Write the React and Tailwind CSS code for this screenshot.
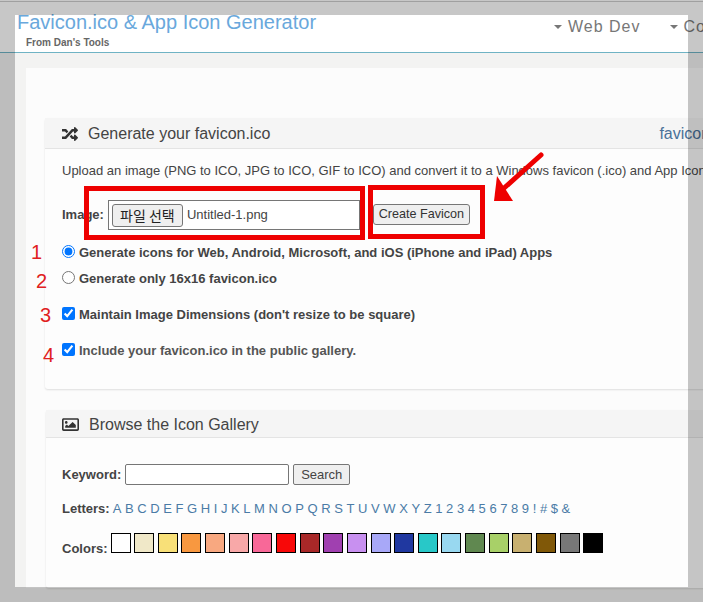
import { FaRandom, FaRegImage } from "react-icons/fa";

const LETTERS = "A B C D E F G H I J K L M N O P Q R S T U V W X Y Z 1 2 3 4 5 6 7 8 9 ! # $ &".split(" ");
const COLORS = [
  "bg-[#ffffff]", "bg-[#f0e8c8]", "bg-[#f8e078]", "bg-[#f89840]", "bg-[#f8a880]", "bg-[#f8a8a8]",
  "bg-[#f86898]", "bg-[#f80808]", "bg-[#a82828]", "bg-[#a040b0]", "bg-[#c890f0]", "bg-[#a8a8f8]",
  "bg-[#2038a0]", "bg-[#28c8c8]", "bg-[#98d8f0]", "bg-[#608850]", "bg-[#a8d068]", "bg-[#c8b070]",
  "bg-[#805808]", "bg-[#787878]", "bg-[#000000]",
];

export default function App() {
  return (
    <div className="relative h-[602px] w-[703px] overflow-hidden bg-white font-['Liberation_Sans',Arial,sans-serif] text-[13px] text-[#333]">
      {/* site header */}
      <header className="flex h-[53px] items-start justify-between whitespace-nowrap border-b border-[#6fb3c4] bg-white pl-[17px]">
        <div>
          <div className="mt-[9px] text-[20px] leading-[26px] text-[#69a8dc]">Favicon.ico &amp; App Icon Generator</div>
          <div className="ml-[9px] mt-[2px] text-[10px] font-bold leading-[12px] text-[#666]">From Dan's Tools</div>
        </div>
        <nav className="mt-[17px] flex w-[149px] gap-[29px] overflow-hidden text-[16px] leading-[19px] tracking-[1px] text-[#777]">
          <span className="flex items-center gap-[6px]"><Caret />Web Dev</span>
          <span className="flex items-center gap-[6px]"><Caret />Contact</span>
        </nav>
      </header>

      {/* page body */}
      <main className="h-[549px] bg-[#f3f3f2] pl-[26px] pt-[15px]">
        <div className="h-[520px] w-[730px] bg-[#fcfcfc] pl-[19px] pt-[50px]">
          <section className="h-[271px] w-[707px] rounded-[3px] bg-[#fdfdfd] shadow-[0_1px_2px_rgba(0,0,0,0.12)]">
            <div className="flex h-[31px] items-center justify-between border-b border-[#e4e4e4] bg-[#f5f5f5] px-[17px] pt-[2px] text-[16px] text-[#444]">
              <div className="flex items-center gap-[10px]">
                <FaRandom className="h-[16px] w-[16px] text-[#333]" />
                <span>Generate your favicon.ico</span>
              </div>
              <a className="text-[#4a7199]">favicon.ico</a>
            </div>
            <div className="pl-[17px] pt-[14px]">
              <p className="whitespace-nowrap leading-[16px] text-[#444]">
                Upload an image (PNG to ICO, JPG to ICO, GIF to ICO) and convert it to a Windows favicon (.ico) and App Icons
              </p>
              <div className="mt-[21px] flex h-[30px] items-center">
                <span className="mr-[4px] font-bold text-[#444]">Image:</span>
                <div className="flex h-[30px] w-[252px] items-center border border-[#767676] bg-white pl-[3px]">
                  <span className="flex h-[23px] w-[71px] items-center justify-center rounded-[3px] border border-[#767676] bg-[#efefef] font-['Noto_Sans_CJK_KR',sans-serif] text-[14px] text-[#222]">파일 선택</span>
                  <span className="ml-[4px] text-[#444]">Untitled-1.png</span>
                </div>
                <button className="ml-[13px] mb-[2px] h-[21px] w-[97px] rounded-[3px] border border-[#767676] bg-[#efefef] text-[12.6px] text-[#333]">Create Favicon</button>
              </div>
              <label className="mt-[15px] flex h-[16px] items-center font-bold text-[#444]">
                <input type="radio" name="mode" defaultChecked className="ml-0 mr-[4px] -mt-[4px] h-[13px] w-[13px] accent-[#0075ff]" />
                Generate icons for Web, Android, Microsoft, and iOS (iPhone and iPad) Apps
              </label>
              <label className="mt-[10px] flex h-[16px] items-center font-bold text-[#444]">
                <input type="radio" name="mode" className="ml-0 mr-[4px] -mt-[4px] h-[13px] w-[13px]" />
                Generate only 16x16 favicon.ico
              </label>
              <label className="mt-[20px] flex h-[16px] items-center font-bold text-[#444]">
                <input type="checkbox" defaultChecked className="ml-0 mr-[4px] -mt-[4px] h-[13px] w-[13px] accent-[#0075ff]" />
                Maintain Image Dimensions (don't resize to be square)
              </label>
              <label className="mt-[20px] flex h-[16px] items-center font-bold text-[#555]">
                <input type="checkbox" defaultChecked className="ml-0 mr-[4px] -mt-[4px] h-[13px] w-[13px] accent-[#0075ff]" />
                Include your favicon.ico in the public gallery.
              </label>
            </div>
          </section>

          <section className="ml-[1px] mt-[21px] h-[178px] w-[700px] rounded-[3px] bg-[#fdfdfd] shadow-[0_1px_2px_rgba(0,0,0,0.12)]">
            <div className="flex h-[28px] items-center gap-[10px] border-b border-[#e4e4e4] bg-[#f5f5f5] pl-[16px] pt-[2px] text-[16px] text-[#444]">
              <FaRegImage className="h-[17px] w-[17px] text-[#333]" />
              <span>Browse the Icon Gallery</span>
            </div>
            <div className="pl-[16px] pt-[26px]">
              <div className="flex h-[21px] items-center">
                <span className="mr-[4px] font-bold text-[#444]">Keyword:</span>
                <input className="h-[21px] w-[164px] rounded-[2px] border border-[#767676] bg-white" />
                <button className="ml-[4px] h-[21px] w-[57px] rounded-[2px] border border-[#767676] bg-[#efefef] text-[13px] text-[#444]">Search</button>
              </div>
              <div className="mt-[16px] flex h-[16px] items-center">
                <span className="mr-[3px] font-bold text-[#444]">Letters:</span>
                <span className="flex gap-[3.6px] text-[#4a7ba6]">
                  {LETTERS.map((l) => <a key={l}>{l}</a>)}
                </span>
              </div>
              <div className="mt-[16px] flex items-end">
                <span className="mr-[3px] translate-y-[5px] font-bold text-[#444]">Colors:</span>
                <span className="flex gap-[3.65px]">
                  {COLORS.map((c) => <span key={c} className={`h-[20px] w-[20px] border border-black ${c}`} />)}
                </span>
              </div>
            </div>
          </section>
        </div>
      </main>

      {/* red annotations */}
      <div className="absolute left-[84px] top-[186px] h-[54px] w-[281px] border-[5px] border-[#ee0000]" />
      <div className="absolute left-[368px] top-[185px] h-[54px] w-[117px] border-[5px] border-[#ee0000]" />
      <svg className="absolute left-[490px] top-[150px]" width="56" height="56" viewBox="0 0 56 56">
        <path d="M51 5 L13 39" stroke="#ee0000" strokeWidth="5" strokeLinecap="round" />
        <path d="M4 51 L7 26 L23 51 Z" fill="#ee0000" />
      </svg>
      <span className="absolute left-[31px] top-[242px] text-[20px] leading-[20px] text-[#e02020]">1</span>
      <span className="absolute left-[36px] top-[271px] text-[20px] leading-[20px] text-[#e02020]">2</span>
      <span className="absolute left-[40px] top-[305px] text-[20px] leading-[20px] text-[#e02020]">3</span>
      <span className="absolute left-[43px] top-[345px] text-[20px] leading-[20px] text-[#e02020]">4</span>

      {/* translucent gray frame over the page */}
      <div className="absolute inset-x-0 top-0 h-[15px] bg-black/[0.22]" />
      <div className="absolute inset-x-0 top-[1px] h-[1px] bg-[#a0a0a0]" />
      <div className="absolute bottom-[15px] left-0 top-[15px] w-[15px] bg-black/[0.22]" />
      <div className="absolute bottom-[15px] right-0 top-[15px] w-[15px] bg-black/[0.22]" />
      <div className="absolute inset-x-0 bottom-0 h-[15px] bg-black/[0.22]" />
    </div>
  );
}

function Caret() {
  return <span className="inline-block h-0 w-0 border-x-[4px] border-t-[4px] border-x-transparent border-t-[#777]" />;
}
